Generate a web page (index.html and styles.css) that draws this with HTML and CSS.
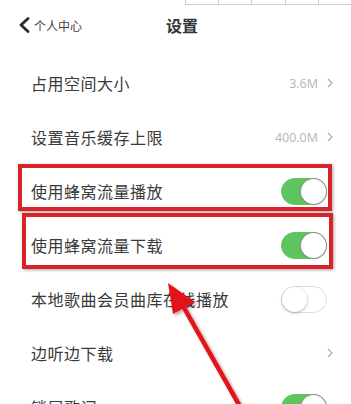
FILE: index.html
```html
<!DOCTYPE html>
<html lang="zh-CN">
<head>
    <meta charset="UTF-8">
    <meta name="viewport" content="width=device-width, initial-scale=1.0">
    <title>设置</title>
    <link rel="stylesheet" href="styles.css">
</head>
<body>
    <div class="page">
        <div class="topgrid">
            <span></span><span></span><span></span><span></span><span></span>
        </div>
        <div class="header">
            <div class="back">
                <svg class="back-icon" width="12" height="16" viewBox="0 0 12 16">
                    <path d="M10 1.5 L3 8 L10 14.5" fill="none" stroke="#2a2a2a" stroke-width="2.8" stroke-linecap="round" stroke-linejoin="round"/>
                </svg>
                <span>个人中心</span>
            </div>
            <div class="title">设置</div>
        </div>

        <div class="list">
            <div class="row">
                <span class="label">占用空间大小</span>
                <span class="value">3.6M</span>
                <svg class="chev" width="6" height="10" viewBox="0 0 6 10"><path d="M1 1 L5 5 L1 9" fill="none" stroke="#aaa" stroke-width="1.2"/></svg>
            </div>
            <div class="row">
                <span class="label">设置音乐缓存上限</span>
                <span class="value">400.0M</span>
                <svg class="chev" width="6" height="10" viewBox="0 0 6 10"><path d="M1 1 L5 5 L1 9" fill="none" stroke="#aaa" stroke-width="1.2"/></svg>
            </div>
            <div class="row">
                <span class="label">使用蜂窝流量播放</span>
                <span class="toggle on"></span>
            </div>
            <div class="row">
                <span class="label">使用蜂窝流量下载</span>
                <span class="toggle on"></span>
            </div>
            <div class="row">
                <span class="label">本地歌曲会员曲库在线播放</span>
                <span class="toggle"></span>
            </div>
            <div class="row">
                <span class="label">边听边下载</span>
                <svg class="chev" width="6" height="10" viewBox="0 0 6 10"><path d="M1 1 L5 5 L1 9" fill="none" stroke="#aaa" stroke-width="1.2"/></svg>
            </div>
            <div class="row">
                <span class="label">锁屏歌词</span>
                <span class="toggle on"></span>
            </div>
        </div>

        <!-- annotations -->
        <div class="mark mark-1"></div>
        <div class="mark mark-2"></div>
        <svg class="arrow" width="351" height="404" viewBox="0 0 351 404">
            <defs>
                <filter id="blur" x="-20%" y="-20%" width="140%" height="140%">
                    <feGaussianBlur stdDeviation="1.5"/>
                </filter>
            </defs>
            <g opacity="0.35" filter="url(#blur)" transform="translate(2,2)">
                <line x1="242" y1="410" x2="183" y2="306" stroke="#600" stroke-width="5"/>
                <polygon points="168,283 173,314 195,302" fill="#600"/>
            </g>
            <line x1="242" y1="410" x2="183" y2="306" stroke="#e3131b" stroke-width="4.5"/>
            <polygon points="168,283 173,314 195,302" fill="#e3131b"/>
        </svg>
    </div>
</body>
</html>
```

FILE: styles.css
```css
* {
    margin: 0;
    padding: 0;
    box-sizing: border-box;
}
body {
    background: #ffffff;
    font-family: "Noto Sans CJK SC", "Noto Sans", sans-serif;
    color: #333;
}
.page {
    position: relative;
    width: 351px;
    height: 404px;
    overflow: hidden;
}
.topgrid {
    display: flex;
    height: 5px;
    margin-left: 185px;
    border-bottom: 1px solid #c9cfcf;
}
.topgrid span {
    flex: 1;
    border-left: 1px solid #c9cfcf;
}
.header {
    display: flex;
    align-items: center;
    height: 40px;
}
.back {
    display: flex;
    align-items: center;
    width: 166px;
    padding-left: 18px;
    font-size: 12px;
    color: #444;
}
.back-icon {
    margin-right: 4px;
}
.title {
    font-size: 16px;
    font-weight: 700;
    color: #333;
}
.list {
    padding-top: 11px;
}
.row {
    display: flex;
    align-items: center;
    height: 54px;
    padding: 0 18px 0 31px;
}
.label {
    flex: 1;
    font-size: 16px;
    letter-spacing: 0.5px;
    color: #3a3a3a;
}
.value {
    font-family: "Open Sans", "Noto Sans", sans-serif;
    font-size: 12.5px;
    color: #b5b5b5;
    margin-right: 9px;
}
.chev {
    display: block;
}
.toggle {
    position: relative;
    width: 46px;
    height: 27px;
    margin-right: 6px;
    border-radius: 14px;
    background: #fff;
    border: 1px solid #ddd;
}
.toggle::after {
    content: "";
    position: absolute;
    top: 0;
    left: 0;
    width: 25px;
    height: 25px;
    border-radius: 50%;
    background: #fff;
    box-shadow: 0 1px 3px rgba(0, 0, 0, 0.3);
}
.toggle.on {
    background: #5ec45e;
    border-color: #5ec45e;
}
.toggle.on::after {
    left: auto;
    right: 0;
    box-shadow: 0 0 0 1px #8a9a8a, 0 1px 2px rgba(0, 0, 0, 0.2);
}
.mark {
    position: absolute;
    border: 4px solid #d8232a;
    box-shadow: 1px 1px 3px rgba(0, 0, 0, 0.35);
}
.mark-1 {
    left: 18px;
    top: 164px;
    width: 314px;
    height: 47px;
}
.mark-2 {
    left: 22px;
    top: 213px;
    width: 311px;
    height: 56px;
}
.arrow {
    position: absolute;
    left: 0;
    top: 0;
}
```
